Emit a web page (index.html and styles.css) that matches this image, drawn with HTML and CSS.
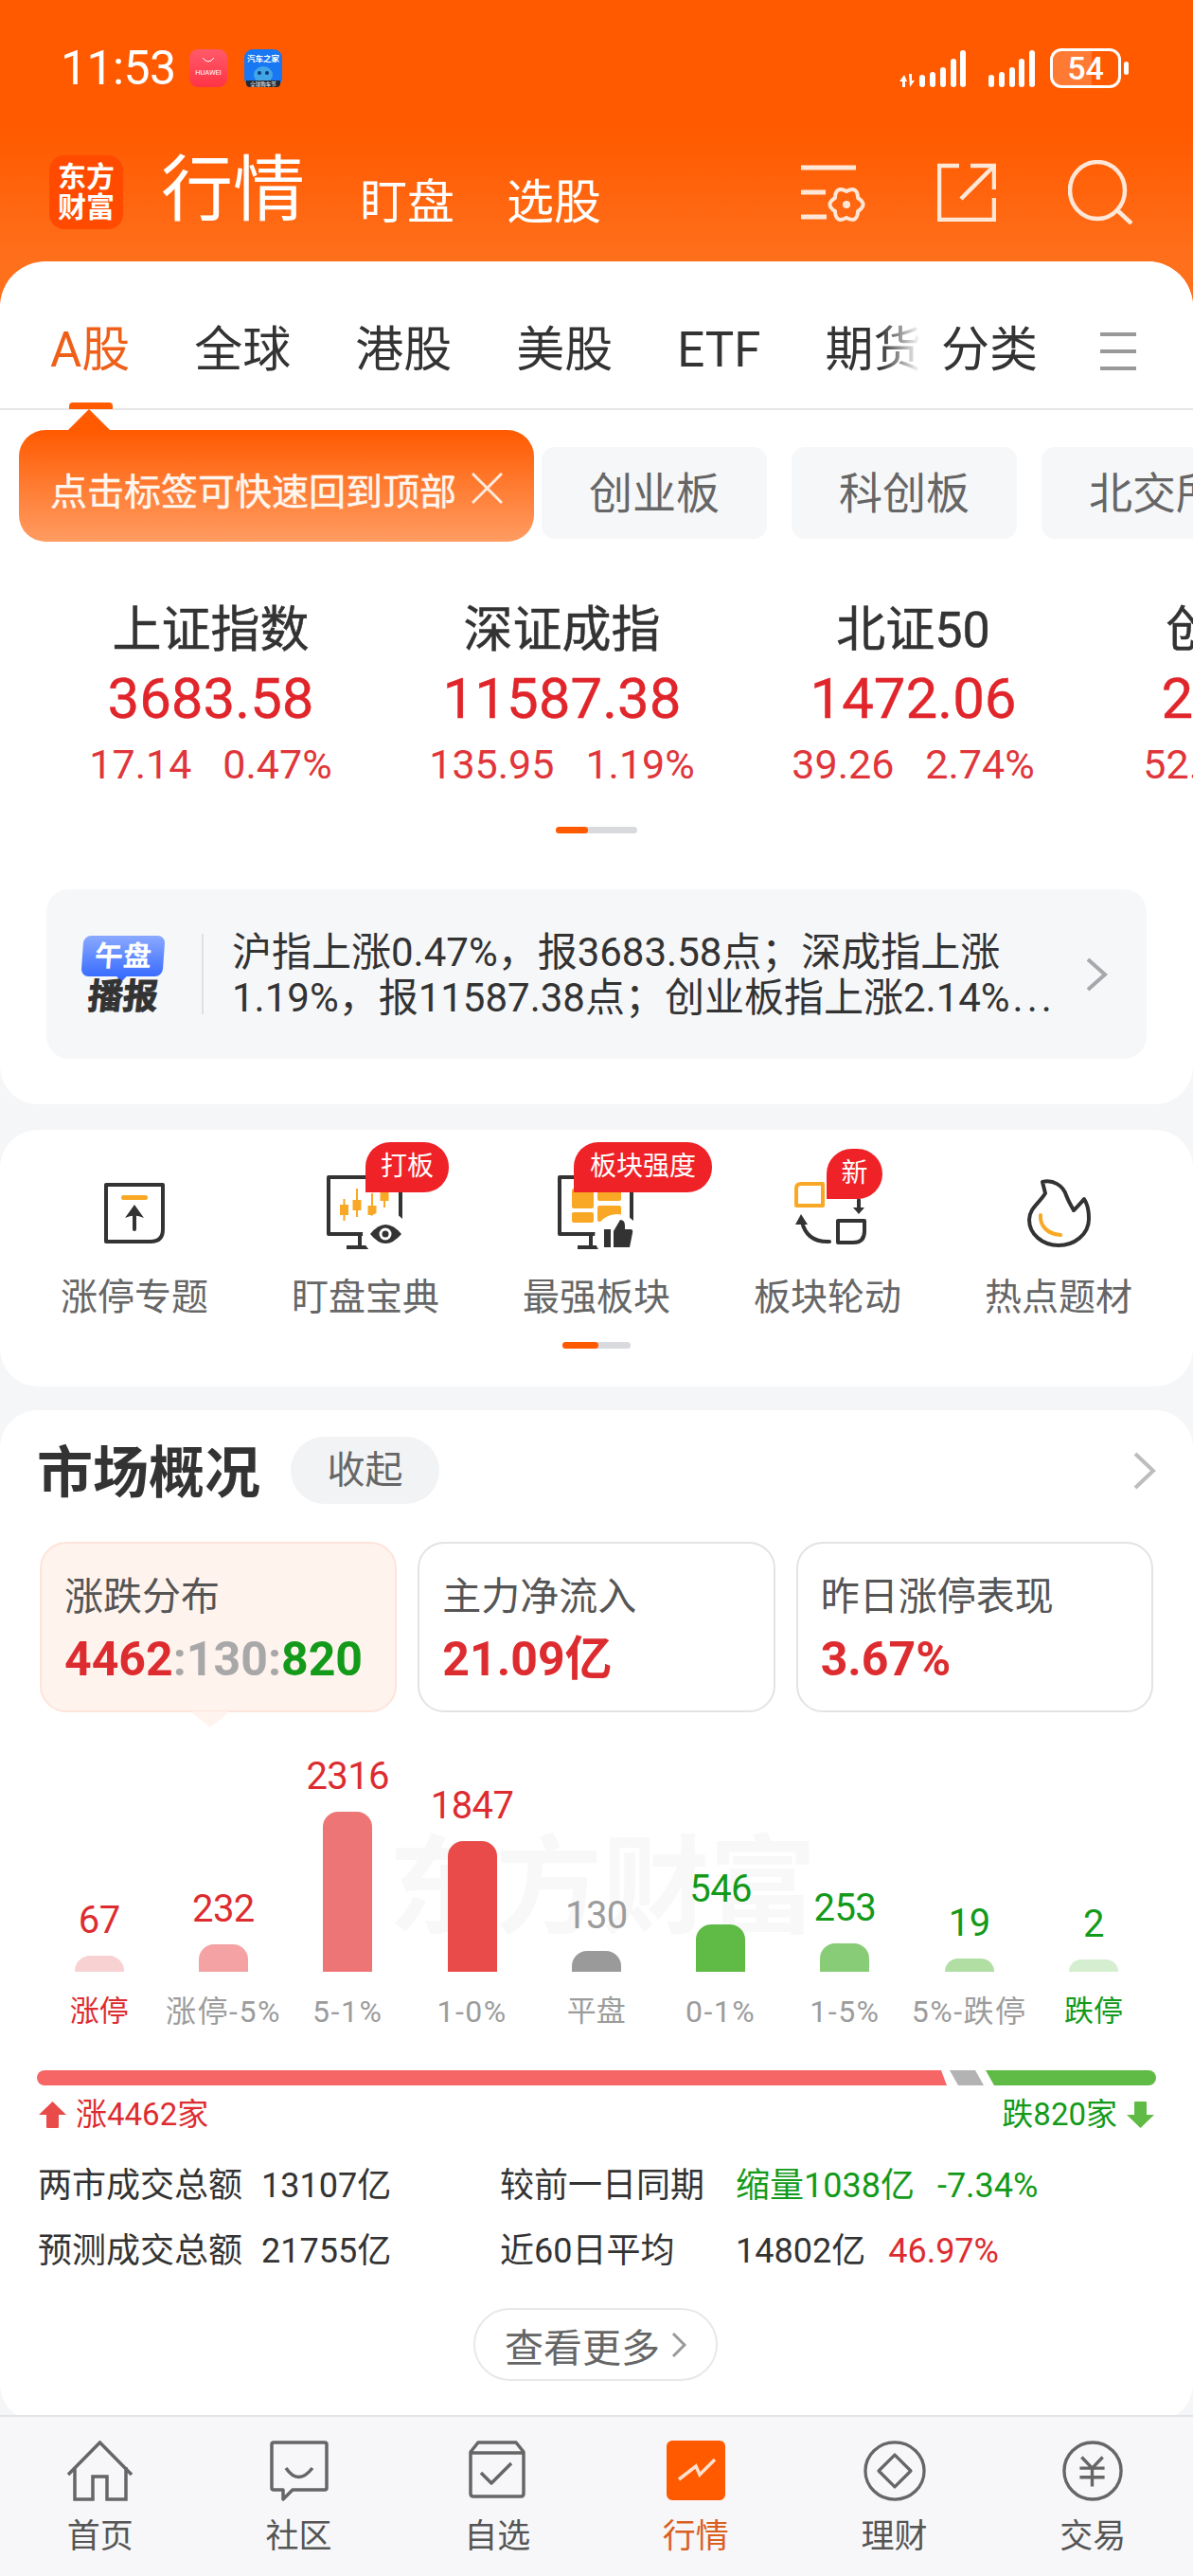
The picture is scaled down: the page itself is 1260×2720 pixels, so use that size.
FILE: index.html
```html
<!DOCTYPE html>
<html lang="zh-CN">
<head>
    <meta charset="UTF-8">
    <title>行情</title>
    <link rel="stylesheet" href="styles.css">
</head>
<body>
<div class="page">
    <header class="top">
        <div class="status">
            <span class="clock">11:53</span>
            <svg class="app-icon" viewBox="0 0 40 40">
                <defs><linearGradient id="hw" x1="0" y1="0" x2="0" y2="1"><stop offset="0" stop-color="#ff5a6a"/><stop offset="1" stop-color="#ff3346"/></linearGradient></defs>
                <rect width="40" height="40" rx="9" fill="url(#hw)"/>
                <path d="M14 9Q20 17 26 9" fill="none" stroke="#fff" stroke-width="1"/>
                <text x="20" y="27" class="hw-text">HUAWEI</text>
            </svg>
            <svg class="app-icon second" viewBox="0 0 40 40">
                <rect width="40" height="40" rx="9" fill="#1877f2"/>
                <text x="20" y="13" class="car-text">汽车之家</text>
                <ellipse cx="20" cy="27" rx="10" ry="9" fill="#41a5e6"/>
                <circle cx="16" cy="25" r="2" fill="#0c3c78"/>
                <circle cx="24" cy="25" r="2" fill="#0c3c78"/>
                <path d="M2 33H38V36Q38 40 34 40H6Q2 40 2 36Z" fill="#26282e"/>
                <text x="20" y="39" class="car-small">全球购车节</text>
            </svg>
            <svg class="signal" viewBox="0 0 143 40">
                <g fill="#fff">
                    <path d="M5 27l-5 7h3v6h3v-6h2zM11 40l5-7h-3v-7h-3z"/>
                    <rect x="21" y="27" width="6" height="13" rx="3"/>
                    <rect x="32" y="24" width="6" height="16" rx="3"/>
                    <rect x="43" y="19" width="6" height="21" rx="3"/>
                    <rect x="54" y="10" width="6" height="30" rx="3"/>
                    <rect x="64" y="1" width="6" height="39" rx="3"/>
                    <rect x="94" y="27" width="6" height="13" rx="3"/>
                    <rect x="105" y="24" width="6" height="16" rx="3"/>
                    <rect x="116" y="19" width="6" height="21" rx="3"/>
                    <rect x="126" y="10" width="6" height="30" rx="3"/>
                    <rect x="137" y="1" width="6" height="39" rx="3"/>
                </g>
            </svg>
            <div class="battery"><span>54</span></div>
            <i class="battery-nub"></i>
        </div>
        <div class="titlebar">
            <div class="logo">东方<br>财富</div>
            <h1 class="title">行情</h1>
            <span class="subtitle first">盯盘</span>
            <span class="subtitle">选股</span>
            <div class="top-icons">
                <svg width="68" height="62" viewBox="0 0 68 62" fill="none" stroke="#ffe7d8" stroke-width="5">
                    <path d="M0 5H58M0 31H26M0 57H27"/>
                    <path transform="translate(48 44)" stroke-width="4" d="M12.1 7Q11.5 20 0 14Q-11.5 20-12.1 7Q-23 0-12.1-7Q-11.5-20 0-14Q11.5-20 12.1-7Q23 0 12.1 7Z"/>
                    <circle cx="48" cy="44" r="4" fill="#ffe7d8" stroke="none"/>
                </svg>
                <svg width="62" height="62" viewBox="0 0 62 62" fill="none" stroke="#ffe7d8" stroke-width="4.5">
                    <path d="M23 3H2V60H60V37M60 28V3H35M60 3L25 38"/>
                </svg>
                <svg width="68" height="68" viewBox="0 0 68 68" fill="none" stroke="#ffe7d8" stroke-width="4.5">
                    <ellipse cx="31" cy="32" rx="29" ry="30"/>
                    <path d="M52 53L67 67"/>
                </svg>
            </div>
        </div>
    </header>

    <section class="card quote-card">
        <nav class="tabs">
            <a class="tab on">A股</a>
            <a class="tab">全球</a>
            <a class="tab">港股</a>
            <a class="tab">美股</a>
            <a class="tab">ETF</a>
            <a class="tab">期货</a>
            <div class="tab-more">
                <a class="tab">分类</a>
                <svg width="38" height="42" viewBox="0 0 38 42" stroke="#999" stroke-width="4"><path d="M0 3H38M0 21H38M0 39H38"/></svg>
            </div>
        </nav>
        <div class="tip">
            <span>点击标签可快速回到顶部</span>
            <svg width="33" height="33" viewBox="0 0 33 33" stroke="#ffeadd" stroke-width="3"><path d="M1 1L32 32M32 1L1 32"/></svg>
        </div>
        <div class="chips">
            <span class="chip">创业板</span>
            <span class="chip">科创板</span>
            <span class="chip">北交所</span>
        </div>
        <div class="indexes">
            <div class="index">
                <div class="index-name">上证指数</div>
                <div class="index-value">3683.58</div>
                <div class="index-sub"><span>17.14</span><span>0.47%</span></div>
            </div>
            <div class="index">
                <div class="index-name">深证成指</div>
                <div class="index-value">11587.38</div>
                <div class="index-sub"><span>135.95</span><span>1.19%</span></div>
            </div>
            <div class="index">
                <div class="index-name">北证50</div>
                <div class="index-value">1472.06</div>
                <div class="index-sub"><span>39.26</span><span>2.74%</span></div>
            </div>
            <div class="index">
                <div class="index-name">创业板指</div>
                <div class="index-value">2506.19</div>
                <div class="index-sub"><span>52.53</span><span>2.14%</span></div>
            </div>
        </div>
        <div class="pager pager-index"><i></i></div>
        <div class="brief">
            <div class="brief-logo">
                <div class="brief-bubble">午盘</div>
                <div class="brief-word">播报</div>
            </div>
            <div class="brief-text">
                <div>沪指上涨0.47%，报3683.58点；深成指上涨</div>
                <div>1.19%，报11587.38点；创业板指上涨2.14%<span class="dots">...</span></div>
            </div>
            <svg class="brief-arrow" width="24" height="36" viewBox="0 0 24 36" fill="none" stroke="#a8a8ac" stroke-width="4"><path d="M3 2L21 18L3 34"/></svg>
        </div>
    </section>

    <section class="card tools-card">
        <div class="tools">
            <div class="tool">
                <svg class="tool-icon" viewBox="0 0 88 90" fill="none" stroke="#333" stroke-width="4" stroke-linejoin="round">
                    <path d="M14 11H74V58Q74 71 61 71H14Z"/>
                    <rect x="30" y="22" width="28" height="5" rx="2.5" fill="#f9a825" stroke="none"/>
                    <path d="M44 44V58" stroke-linecap="round"/>
                    <path d="M44 32L54 46Q44 41 34 46Z" fill="#333" stroke="none"/>
                </svg>
                <span class="tool-name">涨停专题</span>
            </div>
            <div class="tool">
                <svg class="tool-icon" viewBox="0 0 88 90" fill="none" stroke="#333" stroke-width="4">
                    <path d="M5 3H81V63H5Z" stroke-linejoin="round"/>
                    <path d="M24 77H50M38 63V77"/>
                    <g stroke="#f9a825" stroke-width="2">
                        <path d="M21.5 26V49M35 15V45M51 20V50M64 10V35"/>
                    </g>
                    <g fill="#f9a825" stroke="none">
                        <rect x="17" y="32" width="9" height="11"/>
                        <rect x="30.5" y="27" width="9" height="11"/>
                        <rect x="46.5" y="33" width="9" height="10"/>
                        <rect x="59.5" y="15" width="9" height="13"/>
                    </g>
                    <circle cx="65" cy="63" r="24" fill="#fff" stroke="none"/>
                    <path d="M49 63Q65 43 82 63Q65 83 49 63Z" fill="#333" stroke="none"/>
                    <circle cx="65" cy="63" r="6.5" fill="#fff" stroke="none"/>
                    <circle cx="65" cy="63" r="3.5" fill="#333" stroke="none"/>
                </svg>
                <span class="tool-name">盯盘宝典</span>
                <span class="badge badge-a">打板</span>
            </div>
            <div class="tool">
                <svg class="tool-icon" viewBox="0 0 88 90" fill="none" stroke="#333" stroke-width="4">
                    <path d="M5 3H81V63H5Z" stroke-linejoin="round"/>
                    <path d="M24 77H50M38 63V77"/>
                    <g fill="#f9a825" stroke="none">
                        <rect x="18" y="15" width="23" height="21" rx="2"/>
                        <rect x="18" y="40" width="23" height="11" rx="2"/>
                        <rect x="45" y="15" width="25" height="13" rx="2"/>
                        <rect x="45" y="33" width="25" height="17" rx="2"/>
                    </g>
                    <circle cx="66" cy="66" r="24" fill="#fff" stroke="none"/>
                    <rect x="52" y="58" width="7" height="19" fill="#333" stroke="none"/>
                    <path d="M62 60L69 48Q74 48 74 54V58H80Q83 58 82 62L79 77H62Z" fill="#333" stroke="none"/>
                </svg>
                <span class="tool-name">最强板块</span>
                <span class="badge badge-b">板块强度</span>
            </div>
            <div class="tool">
                <svg class="tool-icon" viewBox="0 0 88 90" fill="none" stroke="#333" stroke-width="4" stroke-linecap="round">
                    <path d="M16 10H39V33H11V15Q11 10 16 10Z" stroke="#f9a825" stroke-linejoin="round"/>
                    <path d="M55 49H83V60Q83 72 71 72H55Z" stroke-linejoin="round"/>
                    <path d="M77 27V36"/>
                    <path d="M71 35H83L77 42Z" fill="#333" stroke="none"/>
                    <path d="M46 71Q22 72 17 50"/>
                    <path d="M16 42L23 53H10Z" fill="#333" stroke="none"/>
                </svg>
                <span class="tool-name">板块轮动</span>
                <span class="badge badge-c">新</span>
            </div>
            <div class="tool">
                <svg class="tool-icon" viewBox="0 0 88 90" fill="none" stroke="#333" stroke-width="4" stroke-linejoin="round">
                    <path d="M27 8C38 5 49 12 52 22C55 30 58 34 60 38C64 34 68 30 71 26C75 32 76 40 76 47C76 64 60 75 44 75C27 75 13 63 13 48C13 36 24 30 30 20C29 16 28 12 27 8Z"/>
                    <path d="M25 43C24 54 32 63 46 64" stroke="#f9a825" stroke-linecap="round"/>
                </svg>
                <span class="tool-name">热点题材</span>
            </div>
        </div>
        <div class="pager pager-tools"><i></i></div>
    </section>

    <section class="card market-card">
        <div class="market-head">
            <h2>市场概况</h2>
            <span class="fold">收起</span>
            <svg class="market-arrow" width="25" height="40" viewBox="0 0 25 40" fill="none" stroke="#bdbdc0" stroke-width="4"><path d="M3 2L22 20L3 38"/></svg>
        </div>
        <div class="boxes">
            <div class="box on">
                <div class="box-label">涨跌分布</div>
                <div class="box-value"><span class="red">4462</span><span class="grey">:130:</span><span class="green">820</span></div>
            </div>
            <div class="box">
                <div class="box-label">主力净流入</div>
                <div class="box-value red">21.09亿</div>
            </div>
            <div class="box">
                <div class="box-label">昨日涨停表现</div>
                <div class="box-value red">3.67%</div>
            </div>
        </div>
        <div class="chart">
            <div class="watermark">东方财富</div>
            <div class="col red"><span class="num">67</span><i class="bar" style="height:17px;background:#f8d2d3"></i><span class="cap">涨停</span></div>
            <div class="col red"><span class="num">232</span><i class="bar" style="height:29px;background:#f4a2a3"></i><span class="cap grey">涨停-5%</span></div>
            <div class="col red"><span class="num">2316</span><i class="bar" style="height:169px;background:#ee7576"></i><span class="cap grey">5-1%</span></div>
            <div class="col red"><span class="num">1847</span><i class="bar" style="height:138px;background:#e94b4b"></i><span class="cap grey">1-0%</span></div>
            <div class="col grey"><span class="num">130</span><i class="bar" style="height:22px;background:#9a9a9a"></i><span class="cap">平盘</span></div>
            <div class="col green"><span class="num">546</span><i class="bar" style="height:50px;background:#5fba46"></i><span class="cap grey">0-1%</span></div>
            <div class="col green"><span class="num">253</span><i class="bar" style="height:30px;background:#88cc78"></i><span class="cap grey">1-5%</span></div>
            <div class="col green"><span class="num">19</span><i class="bar" style="height:14px;background:#b1dea3"></i><span class="cap grey">5%-跌停</span></div>
            <div class="col green"><span class="num">2</span><i class="bar" style="height:13px;background:#d5eed0"></i><span class="cap">跌停</span></div>
        </div>
        <div class="ratio">
            <i class="ratio-up"></i>
            <i class="ratio-flat"></i>
            <i class="ratio-down"></i>
        </div>
        <div class="ratio-legend">
            <div class="legend red">
                <svg width="29" height="28" viewBox="0 0 29 28"><path d="M14.5 0L29 14H21V27Q21 28 20 28H9Q8 28 8 27V14H0Z" fill="#e94b4b"/></svg>
                <span>涨4462家</span>
            </div>
            <div class="legend green">
                <span>跌820家</span>
                <svg width="29" height="28" viewBox="0 0 29 28"><path d="M14.5 28L29 14H21V1Q21 0 20 0H9Q8 0 8 1V14H0Z" fill="#5fba46"/></svg>
            </div>
        </div>
        <div class="stats">
            <div class="stat">
                <span class="stat-label">两市成交总额</span>
                <span>13107亿</span>
            </div>
            <div class="stat wide">
                <span class="stat-label">较前一日同期</span>
                <span class="green">缩量1038亿</span>
                <span class="green">-7.34%</span>
            </div>
            <div class="stat">
                <span class="stat-label">预测成交总额</span>
                <span>21755亿</span>
            </div>
            <div class="stat wide">
                <span class="stat-label">近60日平均</span>
                <span>14802亿</span>
                <span class="red">46.97%</span>
            </div>
        </div>
        <div class="more">
            <span>查看更多</span>
            <svg width="16" height="28" viewBox="0 0 16 28" fill="none" stroke="#999" stroke-width="3"><path d="M2 2L14 14L2 26"/></svg>
        </div>
    </section>

    <footer class="tabbar">
        <div class="nav-item">
            <svg width="70" height="64" viewBox="0 0 70 64" fill="none" stroke="#666" stroke-width="3.5"><path d="M1 36L34.5 2L68 36M8 28V62H27V38H42V62H62V28"/></svg>
            <span>首页</span>
        </div>
        <div class="nav-item">
            <svg width="62" height="64" viewBox="0 0 62 64" fill="none" stroke="#666" stroke-width="3.5" stroke-linejoin="round"><path d="M4 2H58Q60 2 60 4V50Q60 52 58 52H24L14 62V52H4Q2 52 2 50V4Q2 2 4 2Z"/><path d="M17 29Q30 48 45 29"/></svg>
            <span>社区</span>
        </div>
        <div class="nav-item">
            <svg width="60" height="64" viewBox="0 0 60 64" fill="none" stroke="#666" stroke-width="3.5" stroke-linejoin="round"><path d="M10 2H50L58 12V56Q58 59 55 59H5Q2 59 2 56V12ZM2 13H58"/><path d="M13 34L24 45L45 24"/></svg>
            <span>自选</span>
        </div>
        <div class="nav-item on">
            <svg width="62" height="64" viewBox="0 0 62 64" fill="none"><rect x="0" y="0" width="62" height="63" rx="6" fill="#ff5a00"/><path d="M13 41L31 27L35 36L51 20" stroke="#ffe0cc" stroke-width="3.5"/></svg>
            <span>行情</span>
        </div>
        <div class="nav-item">
            <svg width="70" height="64" viewBox="0 0 70 68" fill="none" stroke="#666" stroke-width="3.5"><ellipse cx="35" cy="34" rx="33" ry="32"/><path d="M35 16L53 34L35 52L17 34Z" stroke-linejoin="round"/></svg>
            <span>理财</span>
        </div>
        <div class="nav-item">
            <svg width="66" height="64" viewBox="0 0 66 66" fill="none" stroke="#666" stroke-width="3.5"><ellipse cx="33" cy="33" rx="31" ry="31"/><path d="M21 18L32.5 30L44 18M32.5 30V50M19 30H46M19 40H46"/></svg>
            <span>交易</span>
        </div>
    </footer>
</div>
</body>
</html>
```
FILE: styles.css
```css
* {
    box-sizing: border-box;
}
body {
    margin: 0;
    font-family: Roboto, "Noto Sans CJK SC", sans-serif;
    color: #333;
}
h1, h2 {
    margin: 0;
    font-weight: 400;
}
.page {
    width: 1260px;
    height: 2720px;
    background-color: #f5f6f8;
    display: flex;
    flex-direction: column;
    overflow: hidden;
}
.red { color: #dd2c30; }
.green { color: #139a1a; }
.grey { color: #9c9c9c; }

/* header */
.top {
    height: 320px;
    margin-bottom: -44px;
    padding-top: 51px;
    flex-shrink: 0;
    background: linear-gradient(#ff5a00 0, #ff5a00 140px, #ff701c 276px);
    color: #fff;
}
.status {
    display: flex;
    align-items: center;
    height: 42px;
    padding-left: 64px;
}
.clock {
    width: 136px;
    font-size: 50px;
    line-height: 42px;
    letter-spacing: -0.6px;
}
.app-icon {
    width: 40px;
    height: 40px;
}
.app-icon.second {
    margin-left: 18px;
}
.hw-text {
    font-size: 7.5px;
    fill: #fff;
    text-anchor: middle;
}
.car-text {
    font-size: 8.5px;
    font-weight: 700;
    fill: #fff;
    text-anchor: middle;
}
.car-small {
    font-size: 5.5px;
    fill: #fff;
    text-anchor: middle;
}
.signal {
    width: 143px;
    height: 40px;
    margin-left: 652px;
}
.battery {
    width: 75px;
    height: 42px;
    margin-left: 16px;
    border: 3px solid #fff;
    border-radius: 12px;
    background: linear-gradient(90deg, #ff7a33 0, #ff7a33 60%, transparent 60%);
    font-size: 34px;
    font-weight: 500;
    line-height: 36px;
    text-align: center;
}
.battery-nub {
    width: 5px;
    height: 14px;
    margin-left: 3px;
    border-radius: 3px;
    background-color: #fff;
}
.titlebar {
    display: flex;
    align-items: flex-end;
    height: 78px;
    margin-top: 71px;
    padding-left: 52px;
    padding-right: 64px;
}
.logo {
    width: 78px;
    height: 78px;
    padding-top: 7px;
    border-radius: 16px;
    background-color: #ff4a00;
    font-size: 30px;
    font-weight: 700;
    line-height: 32px;
    text-align: center;
}
.title {
    margin-left: 40px;
    margin-bottom: 4px;
    font-size: 76px;
    line-height: 74px;
}
.subtitle {
    margin-left: 55px;
    margin-bottom: 3px;
    font-size: 50px;
    line-height: 50px;
}
.subtitle.first {
    margin-left: 58px;
}
.top-icons {
    display: flex;
    align-items: center;
    gap: 76px;
    margin-left: auto;
    align-self: center;
}

/* cards */
.card {
    position: relative;
    flex-shrink: 0;
    background-color: #fff;
    border-radius: 40px;
}
.quote-card {
    border-radius: 48px 48px 40px 40px;
    overflow: hidden;
    padding-bottom: 48px;
}
.tabs {
    position: relative;
    display: flex;
    gap: 68px;
    height: 157px;
    padding: 68px 0 0 53px;
    border-bottom: 2px solid #e6e6e8;
}
.tab {
    position: relative;
    font-size: 51px;
    line-height: 52px;
    white-space: nowrap;
}
.tab.on {
    color: #ef5f19;
}
.tab.on::after {
    content: "";
    position: absolute;
    left: 20px;
    top: 81px;
    width: 46px;
    height: 7px;
    border-radius: 4px 4px 0 0;
    background-color: #ff5a00;
}
.tab-more {
    position: absolute;
    right: 0;
    top: 0;
    display: flex;
    align-items: flex-start;
    justify-content: flex-end;
    gap: 66px;
    width: 288px;
    height: 155px;
    padding: 68px 60px 0 0;
    background-color: #fff;
}
.tab-more svg {
    margin-top: 6px;
}
.tab-more::before {
    content: "";
    position: absolute;
    left: -42px;
    top: 0;
    width: 42px;
    height: 100%;
    background: linear-gradient(90deg, rgba(255, 255, 255, 0), #fff);
}
.tip {
    position: absolute;
    left: 20px;
    top: 178px;
    z-index: 2;
    display: flex;
    align-items: center;
    gap: 16px;
    width: 544px;
    height: 118px;
    padding: 5px 0 0 33px;
    border-radius: 28px;
    background: linear-gradient(#ff5a00, #ff9c62);
    color: #fff6ef;
    font-size: 39px;
    -webkit-text-stroke: 0.5px #fff6ef;
    white-space: nowrap;
}
.tip::before {
    content: "";
    position: absolute;
    left: 51px;
    top: -22px;
    border-left: 23px solid transparent;
    border-right: 23px solid transparent;
    border-bottom: 23px solid #ff5a00;
}
.chips {
    display: flex;
    gap: 26px;
    padding: 39px 0 0 572px;
}
.chip {
    flex-shrink: 0;
    width: 238px;
    height: 97px;
    border-radius: 14px;
    background-color: #f6f7f9;
    color: #666;
    font-size: 46px;
    line-height: 99px;
    text-align: center;
}
.indexes {
    display: flex;
    margin-top: 67px;
    padding-left: 37px;
}
.index {
    flex: 0 0 371px;
    text-align: center;
}
.index-name {
    font-size: 52px;
    line-height: 60px;
    -webkit-text-stroke: 0.5px #333;
}
.index-value {
    margin-top: 6px;
    color: #e0252b;
    font-size: 60px;
    line-height: 72px;
    -webkit-text-stroke: 0.4px #e0252b;
}
.index-sub {
    display: flex;
    justify-content: center;
    gap: 33px;
    margin-top: 8px;
    color: #e0353a;
    font-size: 43px;
    line-height: 50px;
    white-space: nowrap;
}
.pager {
    position: relative;
    width: 86px;
    height: 7px;
    margin: 0 auto;
    border-radius: 4px;
    background-color: #d8dade;
}
.pager i {
    position: absolute;
    left: 0;
    top: 0;
    width: 34px;
    height: 100%;
    border-radius: 4px;
    background-color: #ff5a00;
}
.pager-index {
    margin-top: 41px;
}
.brief {
    display: flex;
    align-items: center;
    height: 179px;
    margin: 59px 49px 0;
    padding: 0 41px 0 38px;
    border-radius: 24px;
    background-color: #f6f7f9;
}
.brief-logo {
    width: 86px;
    padding-top: 2px;
}
.brief-bubble {
    position: relative;
    height: 43px;
    border-radius: 8px;
    background: linear-gradient(#8aa9ff, #3a6dff);
    color: #fff;
    font-size: 30px;
    font-weight: 700;
    line-height: 43px;
    text-align: center;
    transform: skewX(-4deg);
}
.brief-bubble::after {
    content: "";
    position: absolute;
    left: 37px;
    bottom: -6px;
    border-left: 6px solid transparent;
    border-right: 6px solid transparent;
    border-top: 7px solid #3a6dff;
}
.brief-word {
    margin-top: 4px;
    font-size: 37px;
    font-weight: 700;
    line-height: 36px;
    text-align: center;
    -webkit-text-stroke: 1px #333;
    transform: skewX(-6deg);
}
.brief-text {
    height: 85px;
    margin-left: 40px;
    padding-left: 30px;
    border-left: 2px solid #dfe0e3;
    font-size: 42px;
    line-height: 48px;
    white-space: nowrap;
}
.brief-text div {
    position: relative;
    top: -4px;
}
.dots {
    margin-left: 3px;
    letter-spacing: 4px;
}
.brief-arrow {
    margin-left: auto;
}
.tools-card {
    height: 271px;
    margin-top: 27px;
    padding: 0 20px;
}
.tools {
    display: flex;
}
.tool {
    position: relative;
    display: flex;
    flex-direction: column;
    align-items: center;
    flex: 0 0 244px;
    padding-top: 47px;
}
.tool-icon {
    width: 88px;
    height: 90px;
}
.tool-name {
    margin-top: 17px;
    color: #666;
    font-size: 39px;
    line-height: 46px;
}
.badge {
    position: absolute;
    top: 13px;
    height: 53px;
    padding: 0 16px;
    border-radius: 26px 26px 26px 0;
    background-color: #ef2227;
    color: #fff;
    font-size: 28px;
    line-height: 52px;
    white-space: nowrap;
}
.badge-a {
    left: 122px;
}
.badge-b {
    left: 98px;
    padding: 0 17px;
}
.badge-c {
    left: 121px;
    top: 20px;
    width: 59px;
    padding: 0;
    border-radius: 30px 30px 30px 0;
    text-align: center;
}
.pager-tools {
    position: absolute;
    left: 594px;
    top: 224px;
    width: 72px;
    margin: 0;
}
.pager-tools i {
    width: 38px;
}
.market-card {
    height: 1068px;
    margin-top: 25px;
    margin-bottom: -7px;
    padding: 28px 39px 0;
}
.market-head {
    display: flex;
    align-items: center;
    height: 71px;
}
.market-head h2 {
    padding-top: 6px;
    font-size: 59px;
    font-weight: 700;
    line-height: 71px;
}
.fold {
    width: 157px;
    height: 71px;
    margin-left: 32px;
    border-radius: 36px;
    background-color: #f2f3f5;
    color: #666;
    font-size: 40px;
    line-height: 71px;
    text-align: center;
}
.market-arrow {
    margin-left: auto;
}
.boxes {
    display: grid;
    grid-template-columns: repeat(3, 1fr);
    gap: 22px;
    margin-top: 40px;
    padding: 0 3px;
}
.box {
    position: relative;
    height: 180px;
    padding: 31px 0 0 24px;
    border: 2px solid #e3e3e6;
    border-radius: 28px;
}
.box.on {
    border-color: #fde4da;
    background-color: #fff3ee;
}
.box.on::after {
    content: "";
    position: absolute;
    left: 157px;
    bottom: -18px;
    border-left: 21px solid transparent;
    border-right: 21px solid transparent;
    border-top: 17px solid #fff3ee;
}
.box-label {
    color: #555;
    font-size: 41px;
    line-height: 50px;
}
.box-value {
    margin-top: 13px;
    font-size: 50px;
    font-weight: 700;
    line-height: 56px;
}
.box-value .grey {
    color: #a8a8a8;
}
.chart {
    position: relative;
    display: flex;
    align-items: flex-end;
    height: 274px;
    margin-bottom: 104px;
}
.watermark {
    position: absolute;
    left: 371px;
    top: 126px;
    color: #f8f8f8;
    font-size: 113px;
    font-weight: 700;
    line-height: 120px;
    white-space: nowrap;
}
.col {
    position: relative;
    display: flex;
    flex: 0 0 131.3px;
    flex-direction: column;
    align-items: center;
    justify-content: flex-end;
    height: 100%;
}
.num {
    margin-bottom: 15px;
    font-size: 40px;
    line-height: 44px;
    letter-spacing: -0.6px;
}
.bar {
    width: 52px;
    border-radius: 16px 16px 0 0;
}
.cap {
    position: absolute;
    top: 100%;
    margin-top: 20px;
    font-size: 31px;
    line-height: 44px;
    white-space: nowrap;
}
.cap.grey {
    font-size: 32px;
    letter-spacing: 1.5px;
}
.ratio {
    display: flex;
    height: 16px;
}
.ratio-up {
    width: 961px;
    background-color: #f76666;
    border-radius: 8px 0 0 8px;
    clip-path: polygon(0 0, 955px 0, 100% 100%, 0 100%);
}
.ratio-flat {
    width: 36px;
    margin-left: 3px;
    background-color: #b3b3b3;
    clip-path: polygon(0 0, 27px 0, 100% 100%, 9px 100%);
}
.ratio-down {
    flex: 1;
    margin-left: 2px;
    background-color: #5fba46;
    border-radius: 0 8px 8px 0;
    clip-path: polygon(0 0, 100% 0, 100% 100%, 9px 100%);
}
.ratio-legend {
    display: flex;
    justify-content: space-between;
    margin-top: 14px;
    padding: 0 2px;
}
.legend {
    display: flex;
    align-items: center;
    gap: 10px;
    font-size: 33px;
    line-height: 34px;
}
.stats {
    display: grid;
    grid-template-columns: 488px 1fr;
    row-gap: 25px;
    margin-top: 36px;
    padding-left: 1px;
    font-size: 36px;
    line-height: 44px;
    white-space: nowrap;
}
.stat {
    display: flex;
    gap: 20px;
}
.stat-label {
    flex: 0 0 216px;
}
.stat.wide {
    gap: 24px;
}
.stat.wide .stat-label {
    flex-basis: 225px;
}
.more {
    display: flex;
    align-items: center;
    justify-content: center;
    gap: 12px;
    width: 258px;
    height: 77px;
    margin: 38px 0 0 461px;
    border: 2px solid #e8e8ea;
    border-radius: 39px;
    color: #666;
    font-size: 41px;
}
.tabbar {
    position: relative;
    z-index: 1;
    display: flex;
    flex: 1;
    padding: 0 1px;
    border-top: 2px solid #e4e4e8;
    background-color: #f7f7f9;
}
.nav-item {
    display: flex;
    flex: 1;
    flex-direction: column;
    align-items: center;
    padding-top: 25px;
    color: #555;
    font-size: 35px;
    line-height: 42px;
}
.nav-item span {
    margin-top: 17px;
}
.nav-item.on {
    color: #d9601f;
}
```
